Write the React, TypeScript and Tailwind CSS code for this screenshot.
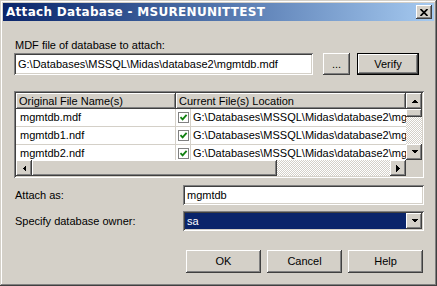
import * as React from "react";

const raised =
  "shadow-[inset_-1px_-1px_0_#404040,inset_1px_1px_0_#fff,inset_-2px_-2px_0_#808080,inset_2px_2px_0_#D4D0C8]";
const sunken =
  "shadow-[inset_1px_1px_0_#808080,inset_-1px_-1px_0_#fff,inset_2px_2px_0_#404040,inset_-2px_-2px_0_#D4D0C8]";
const dither =
  "bg-[repeating-conic-gradient(#fff_0_25%,#D4D0C8_0_50%)] bg-[length:2px_2px]";

type Dir = "up" | "down" | "left" | "right";

function Arrow({ dir }: { dir: Dir }) {
  const pts: Record<Dir, string> = {
    up: "0,4 7,4 3.5,0.5",
    down: "0,0 7,0 3.5,3.5",
    left: "4,0 4,7 0.5,3.5",
    right: "0,0 0,7 3.5,3.5",
  };
  const vertical = dir === "up" || dir === "down";
  return (
    <svg
      width={vertical ? 7 : 4}
      height={vertical ? 4 : 7}
      viewBox={vertical ? "0 0 7 4" : "0 0 4 7"}
      shapeRendering="crispEdges"
    >
      <polygon points={pts[dir]} fill="#000" />
    </svg>
  );
}

function ScrollBtn({ dir }: { dir: Dir }) {
  return (
    <div
      className={`w-[16px] h-[16px] shrink-0 bg-[#D4D0C8] flex items-center justify-center ${raised}`}
    >
      <Arrow dir={dir} />
    </div>
  );
}

function Button({ label, className = "" }: { label: string; className?: string }) {
  return (
    <div
      className={`h-[23px] w-[75px] bg-[#D4D0C8] flex items-center justify-center ${raised} ${className}`}
    >
      {label}
    </div>
  );
}

function Check() {
  return (
    <div className="w-[11px] h-[11px] border border-[#808080] bg-white flex items-center justify-center">
      <svg width="9" height="9" viewBox="0 0 9 9">
        <path d="M1.5 4.2 L3.6 6.4 L7.6 1.8" stroke="#108010" strokeWidth="1.8" fill="none" />
      </svg>
    </div>
  );
}

const files = ["mgmtdb.mdf", "mgmtdb1.ndf", "mgmtdb2.ndf"];
const location = "G:\\Databases\\MSSQL\\Midas\\database2\\mgmtdb.mdf";

export default function App() {
  return (
    <div
      className={`w-[437px] h-[286px] bg-[#D4D0C8] p-[3px] flex flex-col text-[11px] leading-[13px] text-black [font-family:'Liberation_Sans',Arial,sans-serif] shadow-[inset_-1px_-1px_0_#404040,inset_1px_1px_0_#D4D0C8,inset_-2px_-2px_0_#808080,inset_2px_2px_0_#fff]`}
    >
      <div className="h-[18px] shrink-0 flex items-center bg-linear-to-r from-[#0A246A] to-[#A6CAF0] pl-[3px] pr-[2px]">
        <span className="flex-1 text-white font-bold text-[12px] tracking-[0.3px] [font-family:'DejaVu_Sans',sans-serif]">
          Attach Database - MSURENUNITTEST
        </span>
        <div className={`w-[16px] h-[14px] bg-[#D4D0C8] flex items-center justify-center ${raised}`}>
          <svg width="8" height="7" viewBox="0 0 8 7">
            <path d="M0.5 0 L7.5 7 M7.5 0 L0.5 7" stroke="#000" strokeWidth="1.7" />
          </svg>
        </div>
      </div>

      <div className="flex flex-col pl-[11px] pr-[10px]">
        <div className="mt-[18px] h-[13px] pl-[1px]">MDF file of database to attach:</div>
        <div className="mt-[1px] flex h-[22px]">
          <div className={`w-[299px] bg-white pl-[4px] flex items-center whitespace-nowrap overflow-hidden ${sunken}`}>
            {location}
          </div>
          <div className={`ml-[10px] w-[27px] bg-[#D4D0C8] flex items-center justify-center ${raised}`}>
            ...
          </div>
          <div className="ml-[7px] w-[62px] border border-black flex">
            <div className={`flex-1 bg-[#D4D0C8] flex items-center justify-center ${raised}`}>Verify</div>
          </div>
        </div>

        <div className={`mt-[16px] h-[87px] p-[2px] flex flex-col bg-[#D4D0C8] ${sunken}`}>
          <div className="flex h-[67px]">
            <div className="flex-1 flex flex-col overflow-hidden bg-white">
              <div className="h-[16px] shrink-0 flex bg-[#D4D0C8]">
                <div className={`w-[160px] pl-[3px] flex items-center ${raised}`}>Original File Name(s)</div>
                <div className={`flex-1 pl-[3px] flex items-center ${raised}`}>Current File(s) Location</div>
              </div>
              {files.map((f) => (
                <div key={f} className="h-[18px] shrink-0 flex border-b border-[#D4D0C8]">
                  <div className="w-[160px] pl-[4px] flex items-center border-r border-[#D4D0C8]">{f}</div>
                  <div className="w-[15px] flex items-center justify-center border-r border-[#D4D0C8]">
                    <Check />
                  </div>
                  <div className="flex-1 pl-[2px] flex items-center whitespace-nowrap overflow-hidden">
                    {location}
                  </div>
                </div>
              ))}
            </div>
            <div className="w-[16px] flex flex-col">
              <ScrollBtn dir="up" />
              <div className={`h-[8px] shrink-0 bg-[#D4D0C8] ${raised}`} />
              <div className={`flex-1 ${dither}`} />
              <ScrollBtn dir="down" />
            </div>
          </div>
          <div className="flex h-[16px]">
            <ScrollBtn dir="left" />
            <div className={`w-[245px] shrink-0 bg-[#D4D0C8] ${raised}`} />
            <div className={`flex-1 ${dither}`} />
            <ScrollBtn dir="right" />
            <div className="w-[16px] bg-[#D4D0C8]" />
          </div>
        </div>

        <div className="mt-[7px] flex items-center h-[20px]">
          <div className="w-[169px] pl-[1px]">Attach as:</div>
          <div className={`flex-1 h-full bg-white pl-[4px] flex items-center ${sunken}`}>mgmtdb</div>
        </div>

        <div className="mt-[6px] flex items-center h-[20px]">
          <div className="w-[169px] pl-[1px]">Specify database owner:</div>
          <div className={`flex-1 h-full bg-white p-[2px] flex ${sunken}`}>
            <div className="flex-1 bg-[#0A246A] text-white pl-[2px] flex items-center">sa</div>
            <div className={`w-[16px] bg-[#D4D0C8] flex items-center justify-center ${raised}`}>
              <Arrow dir="down" />
            </div>
          </div>
        </div>

        <div className="mt-[19px] flex justify-end gap-[6px] pr-[1px]">
          <Button label="OK" />
          <Button label="Cancel" />
          <Button label="Help" />
        </div>
      </div>
    </div>
  );
}
